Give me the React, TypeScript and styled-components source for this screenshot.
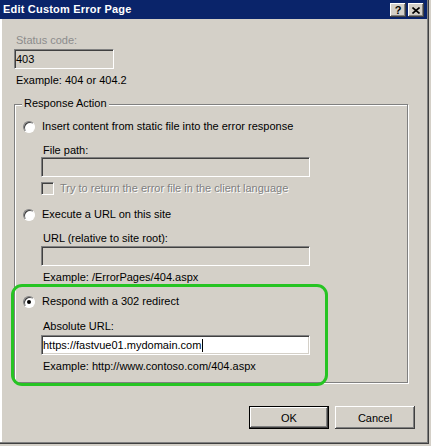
import styled, { createGlobalStyle } from "styled-components";

const GlobalStyle = createGlobalStyle`
  html, body {
    margin: 0;
    padding: 0;
    background: #d4d0c8;
  }
  body {
    font-family: "Liberation Sans", Arial, sans-serif;
    font-size: 11px;
    color: #000;
  }
`;

const Window = styled.div`
  position: relative;
  box-sizing: border-box;
  width: 429px;
  height: 444px;
  display: flex;
  flex-direction: column;
  background: #d4d0c8;
  border-right: 1px solid #404040;
  border-bottom: 1px solid #404040;
`;

const Frame = styled.div`
  flex: 1;
  display: flex;
  flex-direction: column;
  border-right: 1px solid #808080;
  border-bottom: 1px solid #808080;
`;

const TitleBar = styled.div`
  height: 19px;
  display: flex;
  align-items: flex-start;
  justify-content: space-between;
  background: #0a246a;
  padding: 0 3px 0 3px;
`;

const Title = styled.div`
  line-height: 19px;
  font-weight: bold;
  font-size: 11px;
  letter-spacing: 0.2px;
  color: #fff;
`;

const CaptionButtons = styled.div`
  display: flex;
  gap: 2px;
  padding-top: 3px;
`;

const CaptionButton = styled.div`
  width: 16px;
  height: 14px;
  box-sizing: border-box;
  display: flex;
  align-items: center;
  justify-content: center;
  background: #d4d0c8;
  box-shadow: inset -1px -1px #404040, inset 1px 1px #fff,
    inset -2px -2px #808080, inset 2px 2px #d4d0c8;
  font-weight: bold;
  font-size: 11px;
  line-height: 12px;
  color: #000;
`;

const Client = styled.div`
  flex: 1;
  display: flex;
  flex-direction: column;
  align-items: flex-start;
  padding: 15px 0 0 14px;
  box-shadow: inset 2px 0 #fff, inset 1px 0 #d4d0c8;
`;

const Label = styled.div<{ $disabled?: boolean; $gap?: number }>`
  line-height: 13px;
  padding-left: 2px;
  margin-top: ${(p) => p.$gap ?? 0}px;
  color: ${(p) => (p.$disabled ? "#8c8c8c" : "#000")};
  white-space: nowrap;
`;

const TextBox = styled.div<{ $width: number; $enabled?: boolean; $gap?: number }>`
  box-sizing: border-box;
  width: ${(p) => p.$width}px;
  height: 20px;
  margin-top: ${(p) => p.$gap ?? 0}px;
  padding: 0 1px;
  display: flex;
  align-items: center;
  line-height: 16px;
  background: ${(p) => (p.$enabled ? "#fff" : "#d4d0c8")};
  border: 1px solid;
  border-color: #808080 #fff #fff #808080;
  box-shadow: inset 1px 1px #404040, inset -1px -1px #d4d0c8;
  white-space: nowrap;
`;

const Caret = styled.span`
  display: inline-block;
  width: 1px;
  height: 13px;
  background: #000;
  margin-left: 1px;
`;

const Group = styled.div`
  box-sizing: border-box;
  width: 394px;
  margin-top: 17px;
  padding: 0 0 9px 8px;
  display: flex;
  flex-direction: column;
  align-items: flex-start;
  border: 1px solid #808080;
  box-shadow: inset 1px 1px #fff, 1px 1px #fff;
`;

const Legend = styled.div`
  margin: -8px 0 0 -1px;
  padding: 0 2px;
  line-height: 13px;
  background: #d4d0c8;
`;

const OptionRow = styled.div<{ $gap: number }>`
  display: flex;
  align-items: center;
  gap: 7px;
  height: 13px;
  line-height: 13px;
  margin-top: ${(p) => p.$gap}px;
  white-space: nowrap;
`;

const Radio = styled.span<{ $checked?: boolean }>`
  box-sizing: border-box;
  width: 12px;
  height: 12px;
  border-radius: 50%;
  display: flex;
  align-items: center;
  justify-content: center;
  background: #fff;
  border: 1px solid;
  border-color: #808080 #fff #fff #808080;
  box-shadow: inset 1px 1px #404040;

  &::after {
    content: "";
    display: ${(p) => (p.$checked ? "block" : "none")};
    width: 4px;
    height: 4px;
    border-radius: 50%;
    background: #000;
  }
`;

const SubBlock = styled.div<{ $gap: number }>`
  display: flex;
  flex-direction: column;
  align-items: flex-start;
  margin: ${(p) => p.$gap}px 0 0 18px;
`;

const CheckRow = styled.div`
  display: flex;
  align-items: center;
  gap: 6px;
  height: 13px;
  line-height: 13px;
  margin-top: 5px;
  white-space: nowrap;
  color: #808080;
  text-shadow: 1px 1px #fff;
`;

const CheckBox = styled.span`
  box-sizing: border-box;
  width: 13px;
  height: 13px;
  background: #d4d0c8;
  border: 1px solid;
  border-color: #808080 #fff #fff #808080;
  box-shadow: inset 1px 1px #404040, inset -1px -1px #d4d0c8;
`;

const ButtonRow = styled.div`
  align-self: stretch;
  display: flex;
  justify-content: flex-end;
  gap: 6px;
  margin: 23px 12px 0 0;
`;

const Button = styled.div<{ $default?: boolean }>`
  box-sizing: border-box;
  width: 80px;
  height: 23px;
  display: flex;
  align-items: center;
  justify-content: center;
  background: #d4d0c8;
  border: ${(p) => (p.$default ? "1px solid #000" : "none")};
  box-shadow: inset -1px -1px #404040, inset 1px 1px #fff, inset -2px -2px #808080;
`;

// green annotation drawn over the dialog
const Highlight = styled.div`
  position: absolute;
  left: 11px;
  top: 284px;
  width: 317px;
  height: 102px;
  box-sizing: border-box;
  border: 3px solid #26c423;
  border-radius: 11px;
  pointer-events: none;
`;

function CloseGlyph() {
  return (
    <svg width="8" height="7" viewBox="0 0 8 7">
      <path d="M0.5 0.5 L7.5 6.5 M7.5 0.5 L0.5 6.5" stroke="#000" strokeWidth="1.6" fill="none" />
    </svg>
  );
}

function App() {
  return (
    <>
      <GlobalStyle />
      <Window>
        <Frame>
          <TitleBar>
            <Title>Edit Custom Error Page</Title>
            <CaptionButtons>
              <CaptionButton>?</CaptionButton>
              <CaptionButton>
                <CloseGlyph />
              </CaptionButton>
            </CaptionButtons>
          </TitleBar>
          <Client>
            <Label $disabled>Status code:</Label>
            <TextBox $width={100} $gap={2}>403</TextBox>
            <Label $gap={5}>Example: 404 or 404.2</Label>

            <Group>
              <Legend>Response Action</Legend>

              <OptionRow $gap={10}>
                <Radio />
                Insert content from static file into the error response
              </OptionRow>
              <SubBlock $gap={11}>
                <Label>File path:</Label>
                <TextBox $width={269} />
                <CheckRow>
                  <CheckBox />
                  Try to return the error file in the client language
                </CheckRow>
              </SubBlock>

              <OptionRow $gap={13}>
                <Radio />
                Execute a URL on this site
              </OptionRow>
              <SubBlock $gap={11}>
                <Label>URL (relative to site root):</Label>
                <TextBox $width={269} $gap={1} />
                <Label $gap={5}>Example: /ErrorPages/404.aspx</Label>
              </SubBlock>

              <OptionRow $gap={11}>
                <Radio $checked />
                Respond with a 302 redirect
              </OptionRow>
              <SubBlock $gap={12}>
                <Label>Absolute URL:</Label>
                <TextBox $width={269} $enabled $gap={2}>
                  https://fastvue01.mydomain.com
                  <Caret />
                </TextBox>
                <Label $gap={5}>Example: http://www.contoso.com/404.aspx</Label>
              </SubBlock>
            </Group>

            <ButtonRow>
              <Button $default>OK</Button>
              <Button>Cancel</Button>
            </ButtonRow>
          </Client>
        </Frame>
        <Highlight />
      </Window>
    </>
  );
}

export default App;
